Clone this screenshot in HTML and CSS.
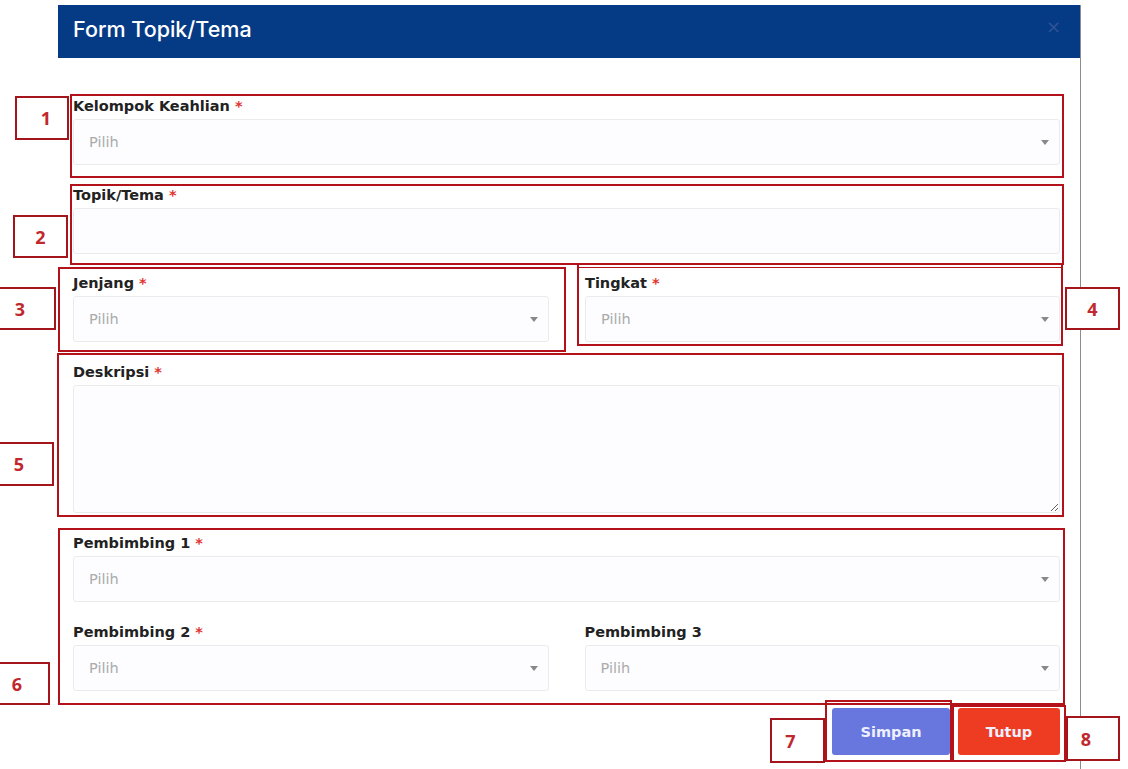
FILE: index.html
```html
<!DOCTYPE html>
<html lang="id">
<head>
    <meta charset="UTF-8">
    <meta name="viewport" content="width=device-width, initial-scale=1.0">
    <title>Form Topik/Tema</title>
    <link rel="stylesheet" href="styles.css">
</head>
<body>

    <div class="modal">
        <div class="modal-header">
            <h5 class="modal-title">Form Topik/Tema</h5>
            <span class="close">&times;</span>
        </div>

        <div class="modal-body">
            <div class="mark mark-1">
                <span class="tag tag-1">1</span>
                <label>Kelompok Keahlian <span class="req">*</span></label>
                <div class="control select">
                    <span class="placeholder">Pilih</span>
                    <svg class="arrow" width="8" height="5" viewBox="0 0 8 5"><path d="M0 0h8L4 5z"/></svg>
                </div>
            </div>

            <div class="mark mark-2">
                <span class="tag tag-2">2</span>
                <label>Topik/Tema <span class="req">*</span></label>
                <div class="control"></div>
            </div>

            <div class="row">
                <div class="mark mark-3">
                    <span class="tag tag-3">3</span>
                    <label>Jenjang <span class="req">*</span></label>
                    <div class="control select">
                        <span class="placeholder">Pilih</span>
                        <svg class="arrow" width="8" height="5" viewBox="0 0 8 5"><path d="M0 0h8L4 5z"/></svg>
                    </div>
                </div>
                <div class="mark mark-4">
                    <span class="tag tag-4">4</span>
                    <label>Tingkat <span class="req">*</span></label>
                    <div class="control select">
                        <span class="placeholder">Pilih</span>
                        <svg class="arrow" width="8" height="5" viewBox="0 0 8 5"><path d="M0 0h8L4 5z"/></svg>
                    </div>
                </div>
            </div>

            <div class="mark mark-5">
                <span class="tag tag-5">5</span>
                <label>Deskripsi <span class="req">*</span></label>
                <textarea class="textarea"></textarea>
            </div>

            <div class="mark mark-6">
                <span class="tag tag-6">6</span>
                <label>Pembimbing 1 <span class="req">*</span></label>
                <div class="control select">
                    <span class="placeholder">Pilih</span>
                    <svg class="arrow" width="8" height="5" viewBox="0 0 8 5"><path d="M0 0h8L4 5z"/></svg>
                </div>
                <div class="grid">
                    <div>
                        <label>Pembimbing 2 <span class="req">*</span></label>
                        <div class="control select">
                            <span class="placeholder">Pilih</span>
                            <svg class="arrow" width="8" height="5" viewBox="0 0 8 5"><path d="M0 0h8L4 5z"/></svg>
                        </div>
                    </div>
                    <div>
                        <label>Pembimbing 3</label>
                        <div class="control select">
                            <span class="placeholder">Pilih</span>
                            <svg class="arrow" width="8" height="5" viewBox="0 0 8 5"><path d="M0 0h8L4 5z"/></svg>
                        </div>
                    </div>
                </div>
            </div>

            <div class="modal-footer">
                <div class="mark mark-7">
                    <span class="tag tag-7">7</span>
                    <button class="btn btn-primary">Simpan</button>
                </div>
                <div class="mark mark-8">
                    <span class="tag tag-8">8</span>
                    <button class="btn btn-danger">Tutup</button>
                </div>
            </div>
        </div>
    </div>

</body>
</html>
```

FILE: styles.css
```css
* {
    box-sizing: border-box;
}

body {
    margin: 0;
    background: #fff;
    font-family: 'DejaVu Sans', 'Noto Sans', sans-serif;
    color: #222;
    overflow: hidden;
}

.modal {
    width: 1023px;
    height: 764px;
    margin: 5px 0 0 58px;
    border-right: 1px solid #8c8c8c;
}

.modal-header {
    height: 53px;
    background-color: #053b85;
    display: flex;
    align-items: center;
    justify-content: space-between;
    padding: 0 19px 6px 15px;
}

.modal-title {
    margin: 0;
    font-family: 'Inter', sans-serif;
    font-size: 21.5px;
    font-weight: 500;
    color: #fff;
}

.close {
    font-size: 18px;
    color: #2f5394;
    margin-top: -4px;
}

.modal-body {
    padding-top: 36px;
}

/* red annotation boxes */
.mark {
    position: relative;
    border: 2px solid #b3121b;
}

.tag {
    position: absolute;
    display: flex;
    align-items: center;
    justify-content: center;
    border: 2px solid #a3141b;
    background: #fff;
    color: #c0282d;
    font-family: 'Open Sans', sans-serif;
    font-size: 18px;
    font-weight: 700;
}

label {
    display: block;
    font-size: 14.5px;
    font-weight: 700;
    line-height: 18px;
    margin-bottom: 4px;
    color: #222;
}

.req {
    color: #e0342f;
}

.control {
    height: 46px;
    border: 1px solid #ebebeb;
    border-radius: 3px;
    background: #fdfdff;
    display: flex;
    align-items: center;
    justify-content: space-between;
    padding: 0 10px 0 15px;
}

.placeholder {
    font-size: 14.5px;
    color: #ababab;
}

.arrow {
    fill: #888;
}

.textarea {
    display: block;
    width: 100%;
    height: 128px;
    border: 1px solid #ebebeb;
    border-radius: 3px;
    background: #fdfdff;
    resize: vertical;
    font-family: inherit;
}

.mark-1 {
    margin: 0 16px 0 12px;
    padding: 1px 2px 11px 1px;
}

.mark-2 {
    margin: 6px 16px 0 12px;
    padding: 0 2px 9px 1px;
}

.row {
    display: flex;
    align-items: flex-start;
    margin-top: -2px;
}

.mark-3 {
    width: 508px;
    margin-top: 4px;
    padding: 5px 15px 8px 13px;
}

.mark-4 {
    width: 486px;
    margin-left: 11px;
    padding: 9px 1px 2px 6px;
    box-shadow: inset 0 5px 0 -3px #fff, inset 0 6px 0 -3px #b3121b;
}

.mark-5 {
    margin: 1px 16px 0 -1px;
    padding: 8px 2px 2px 14px;
}

.mark-6 {
    margin: 11px 15px 0 0;
    padding: 4px 3px 12px 13px;
}

.grid {
    display: grid;
    grid-template-columns: 1fr 1fr;
    gap: 36px;
    margin-top: 21px;
}

.modal-footer {
    display: flex;
    justify-content: flex-end;
    align-items: flex-start;
    padding-right: 14px;
    margin-top: -5px;
}

.mark-7 {
    padding: 6px 0 5px 5px;
}

.mark-8 {
    margin-top: 5px;
    padding: 1px 4px 5px 4px;
}

.btn {
    height: 47px;
    border: none;
    border-radius: 3px;
    font-family: inherit;
    font-size: 14.5px;
    font-weight: 700;
    color: #eef0ff;
}

.btn-primary {
    width: 118px;
    background-color: #6777de;
}

.btn-danger {
    width: 102px;
    background-color: #ee3c23;
}

.tag-1 { left: -57px; top: 0; width: 54px; height: 44px; padding-left: 8px; }
.tag-2 { left: -59px; top: 29px; width: 55px; height: 43px; }
.tag-3 { left: -76px; top: 18px; width: 72px; height: 43px; }
.tag-4 { right: -59px; top: 22px; width: 55px; height: 43px; }
.tag-5 { left: -75px; top: 87px; width: 70px; height: 44px; }
.tag-6 { left: -76px; top: 132px; width: 66px; height: 43px; }
.tag-7 { left: -57px; top: 16px; width: 55px; height: 45px; padding-right: 14px; }
.tag-8 { right: -56px; top: 9px; width: 54px; height: 45px; padding-right: 14px; }
```
